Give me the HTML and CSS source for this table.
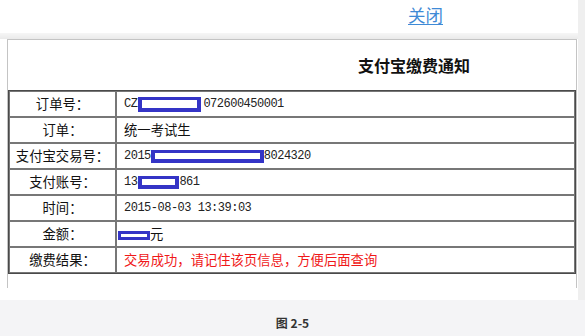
FILE: index.html
```
<!DOCTYPE html>
<html lang="zh-CN">
<head>
<meta charset="utf-8">
<title>支付宝缴费通知</title>
<link rel="stylesheet" href="styles.css">
</head>
<body>
<div class="screen">
  <div class="main">
    <div class="topbar"><a class="close" href="#">关闭</a></div>
    <div class="band"></div>
    <div class="frame">
      <div class="title">支付宝缴费通知</div>
      <table class="info">
        <colgroup><col class="c1"><col class="c2"></colgroup>
        <tr><td class="lbl">订单号：</td><td class="val"><span class="num">CZ</span><span class="bar bar1"></span><span class="num">072600450001</span></td></tr>
        <tr><td class="lbl">订单：</td><td class="val">统一考试生</td></tr>
        <tr><td class="lbl">支付宝交易号：</td><td class="val"><span class="num">2015</span><span class="bar bar2"></span><span class="num">8024320</span></td></tr>
        <tr><td class="lbl">支付账号：</td><td class="val"><span class="num">13</span><span class="bar bar3"></span><span class="num">861</span></td></tr>
        <tr><td class="lbl">时间：</td><td class="val"><span class="num">2015-08-03 13:39:03</span></td></tr>
        <tr><td class="lbl">金额：</td><td class="val"><span class="bar bar4"></span>元</td></tr>
        <tr><td class="lbl">缴费结果：</td><td class="val red">交易成功，请记住该页信息，方便后面查询</td></tr>
      </table>
      <div class="tail"></div>
    </div>
  </div>
  <div class="scroll"></div>
</div>
<div class="footer"><span class="caption">图 2-5</span></div>
</body>
</html>
```
FILE: styles.css
```
html, body {
  margin: 0;
  padding: 0;
  background: #ffffff;
}
body {
  width: 585px;
  height: 336px;
  overflow: hidden;
  font-family: "Noto Sans CJK SC", "Liberation Sans", sans-serif;
  color: #111;
}
.screen {
  display: flex;
  height: 300px;
  background: #fff;
}
.main {
  width: 578px;
  display: flex;
  flex-direction: column;
}
.scroll {
  width: 7px;
  background: #efefef;
}
.topbar {
  height: 33px;
  padding-left: 408px;
  box-sizing: border-box;
}
.close {
  display: inline-block;
  font-size: 17.5px;
  line-height: 30px;
  color: #3f8ad6;
  text-decoration: underline;
  text-underline-offset: 2px;
}
.band {
  height: 6px;
  background: linear-gradient(#f6f6f6, #eaeaea);
}
.frame {
  margin-left: 7px;
  width: 570px;
  box-sizing: border-box;
  border: 1px solid #c4c4c4;
  border-bottom: none;
  height: 249px;
}
.title {
  height: 50px;
  line-height: 50px;
  padding-left: 350px;
  font-size: 16px;
  font-weight: bold;
  color: #111;
}
.info {
  width: 568px;
  table-layout: fixed;
  border-collapse: separate;
  border-spacing: 0;
  border: 1px solid #4a4a4a;
}
.c1 { width: 107px; }
.info td {
  height: 24px;
  padding: 0;
  border: 1px solid #777;
  font-size: 13.33px;
  line-height: 18px;
  white-space: nowrap;
  vertical-align: middle;
}
.lbl {
  text-align: center;
  color: #111;
}
.val {
  padding-left: 7px !important;
  color: #111;
}
.red {
  color: #f01818;
}
.num {
  font-family: "Liberation Mono", "DejaVu Sans Mono", monospace;
  font-size: 12px;
  letter-spacing: -0.5px;
  color: #222;
  vertical-align: middle;
}
.bar {
  display: inline-block;
  vertical-align: middle;
  background: #fff;
  border: 4px solid #3434c6;
  border-top-width: 3px;
}
.bar1 { width: 55px; height: 8px; margin: 0 2px 0 1px; }
.bar2 { width: 105px; height: 6px; }
.bar3 { width: 33px; height: 6px; margin-left: 1px; }
.bar4 { width: 26px; height: 3px; border-width: 3px; margin-left: -6px; }
.tail {
  height: 15px;
}
.footer {
  height: 36px;
  background: #f4f4f6;
  display: flex;
  justify-content: center;
  align-items: flex-start;
  padding-top: 16px;
  box-sizing: border-box;
}
.caption {
  display: block;
  font-size: 12px;
  font-weight: bold;
  line-height: 14px;
  color: #333;
  font-family: "Noto Sans CJK SC", "Liberation Sans", sans-serif;
}
```
